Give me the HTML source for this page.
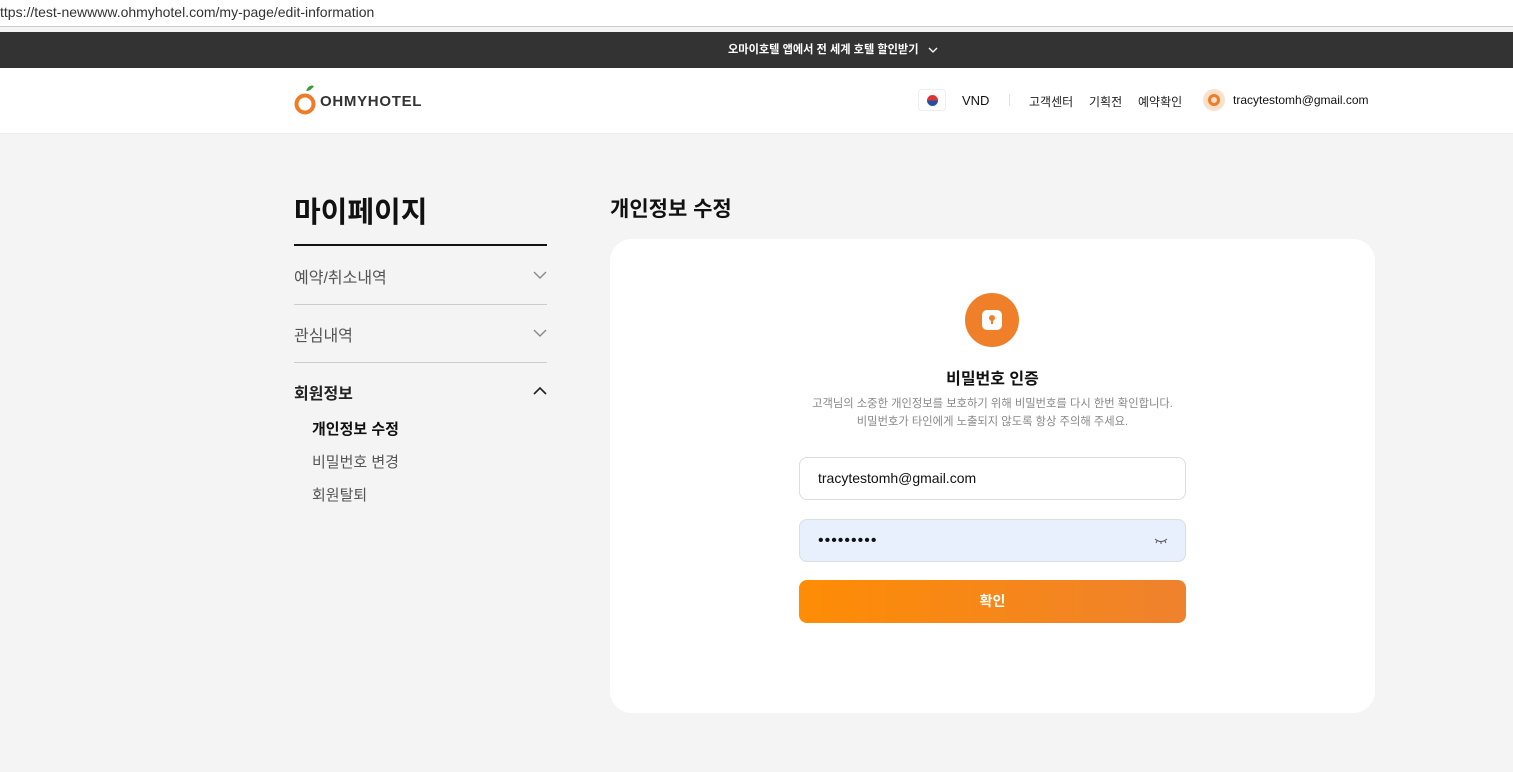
<!DOCTYPE html>
<html><head><meta charset="utf-8"><style>
*{margin:0;padding:0;box-sizing:border-box}
body{width:1513px;height:772px;overflow:hidden;background:#f4f4f4;font-family:"Liberation Sans","Noto Sans CJK KR",sans-serif;position:relative;color:#111}
.url{position:absolute;left:0;top:0;width:1513px;height:27px;background:#fff;border-bottom:1px solid #ccc;font-size:14px;color:#333;padding:4px 0 0 0}
.banner{position:absolute;top:32px;left:0;width:1513px;height:36px;background:#333;color:#fff;font-size:11.2px;font-weight:bold;line-height:36px}
.hdr{position:absolute;top:68px;left:0;width:1513px;height:66px;background:#fff;border-bottom:1px solid #eee}
.a{position:absolute}
.side{font-size:16px;color:#555}
.card{position:absolute;left:610px;top:239px;width:765px;height:474px;background:#fff;border-radius:22px}
.inp{position:absolute;left:799px;width:387px;height:43px;border:1px solid #ddd;border-radius:8px;font-size:14px;padding-left:18px;line-height:41px}
</style></head><body>
<div class="url">ttps://test-newwww.ohmyhotel.com/my-page/edit-information</div>
<div class="banner"><span class="a" style="left:728px">오마이호텔 앱에서 전 세계 호텔 할인받기</span>
<svg class="a" style="left:928px;top:15px" width="10" height="7"><path d="M1 1 L5 5 L9 1" fill="none" stroke="#fff" stroke-width="1.3"/></svg></div>
<div class="hdr">
 <svg class="a" style="left:294px;top:16px" width="24" height="32"><path d="M12 7 Q15 0 20 2 Q17 7 12 7Z" fill="#3a9a3a"/><circle cx="11" cy="20" r="8.5" fill="none" stroke="#f07c28" stroke-width="4"/></svg>
 <div class="a" style="left:320px;top:25px;font-size:15px;font-weight:900;color:#333;letter-spacing:0.7px">OHMYHOTEL</div>
 <div class="a" style="left:918px;top:21px;width:28px;height:22px;border:1px solid #eee;border-radius:4px;background:#fff"><div style="margin:5px auto;width:11px;height:11px;border-radius:50%;background:linear-gradient(#d33 50%,#2350a0 50%)"></div></div>
 <div class="a" style="left:962px;top:25px;font-size:13px">VND</div>
 <div class="a" style="left:1009px;top:26px;width:1px;height:12px;background:#dde"></div>
 <div class="a" style="left:1029px;top:25px;font-size:12px;color:#222">고객센터</div>
 <div class="a" style="left:1089px;top:25px;font-size:12px;color:#222">기획전</div>
 <div class="a" style="left:1138px;top:25px;font-size:12px;color:#222">예약확인</div>
 <div class="a" style="left:1203px;top:21px;width:22px;height:22px;border-radius:50%;background:#fde0cc"><div style="margin:5px;width:12px;height:12px;border-radius:50%;border:3px solid #f07c28"></div></div>
 <div class="a" style="left:1233px;top:25px;font-size:12px">tracytestomh@gmail.com</div>
</div>
<div class="a" style="left:294px;top:189px;font-size:29px;font-weight:bold">마이페이지</div>
<div class="a" style="left:294px;top:244px;width:253px;height:2px;background:#111"></div>
<div class="a side" style="left:294px;top:264px">예약/취소내역</div>
<svg class="a" style="left:533px;top:271px" width="14" height="9"><path d="M1 1 L7 7 L13 1" fill="none" stroke="#888" stroke-width="1.4"/></svg>
<div class="a" style="left:294px;top:304px;width:253px;height:1px;background:#ccc"></div>
<div class="a side" style="left:294px;top:322px">관심내역</div>
<svg class="a" style="left:533px;top:329px" width="14" height="9"><path d="M1 1 L7 7 L13 1" fill="none" stroke="#888" stroke-width="1.4"/></svg>
<div class="a" style="left:294px;top:362px;width:253px;height:1px;background:#ccc"></div>
<div class="a side" style="left:294px;top:380px;color:#222;font-weight:bold">회원정보</div>
<svg class="a" style="left:533px;top:386px" width="14" height="9"><path d="M1 8 L7 2 L13 8" fill="none" stroke="#222" stroke-width="1.6"/></svg>
<div class="a" style="left:312px;top:418px;font-size:15px;font-weight:bold">개인정보 수정</div>
<div class="a" style="left:312px;top:451px;font-size:15px;color:#555">비밀번호 변경</div>
<div class="a" style="left:312px;top:484px;font-size:15px;color:#555">회원탈퇴</div>
<div class="a" style="left:610px;top:193px;font-size:21px;font-weight:bold">개인정보 수정</div>
<div class="card"></div>
<div class="a" style="left:965px;top:293px;width:54px;height:54px;border-radius:50%;background:#f07f2a"><div style="margin:17px;width:20px;height:20px;background:#fff;border-radius:5px;position:relative"><div style="position:absolute;left:7px;top:5px;width:6px;height:6px;border-radius:50%;background:#f07f2a"></div><div style="position:absolute;left:9px;top:9px;width:2px;height:5px;background:#f07f2a"></div></div></div>
<div class="a" style="left:610px;width:765px;top:365px;text-align:center;font-size:16px;font-weight:bold">비밀번호 인증</div>
<div class="a" style="left:610px;width:765px;top:395px;text-align:center;font-size:11.3px;color:#888;line-height:18px">고객님의 소중한 개인정보를 보호하기 위해 비밀번호를 다시 한번 확인합니다.<br>비밀번호가 타인에게 노출되지 않도록 항상 주의해 주세요.</div>
<div class="inp" style="top:457px;background:#fff">tracytestomh@gmail.com</div>
<div class="inp" style="top:519px;background:#e8f0fe;font-size:16px;letter-spacing:1px">•••••••••</div>
<svg class="a" style="left:1154px;top:537px" width="14" height="8"><path d="M1 2 Q7 7 13 2 M3 4 L2 6 M7 5 V7 M11 4 L12 6" fill="none" stroke="#555" stroke-width="1"/></svg>
<div class="a" style="left:799px;top:580px;width:387px;height:43px;border-radius:8px;background:linear-gradient(90deg,#fe8c05,#ef822d);color:#fff;font-size:14px;font-weight:bold;text-align:center;line-height:43px">확인</div>
</body></html>
